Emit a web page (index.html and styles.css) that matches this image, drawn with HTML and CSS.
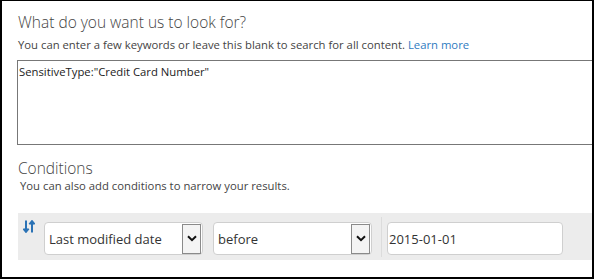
FILE: index.html
```html
<!DOCTYPE html>
<html lang="en">
<head>
  <meta charset="UTF-8" />
  <title>Search query</title>
  <link rel="stylesheet" href="styles.css">
</head>
<body>
  <div class="marco">
    <h2 class="titulo">What do you want us to look for?</h2>
    <p class="ayuda">You can enter a few keywords or leave this blank to search for all content. <a href="#">Learn more</a></p>
    <textarea class="consulta" readonly>SensitiveType:"Credit Card Number"</textarea>

    <h2 class="titulo titulo-cond">Conditions</h2>
    <p class="ayuda ayuda-cond">You can also add conditions to narrow your results.</p>

    <div class="condicion">
      <svg class="orden" width="12" height="13" viewBox="0 0 12 13">
        <path d="M3 0.5 V11.5 M0.4 8.6 L3 11.8 L5.6 8.6" fill="none" stroke="#2a72b5" stroke-width="2"/>
        <path d="M9 12.5 V1.5 M6.4 4.4 L9 1.2 L11.6 4.4" fill="none" stroke="#2a72b5" stroke-width="2"/>
      </svg>
      <div class="campo campo-lista">
        <span class="valor">Last modified date</span>
        <span class="boton"><svg width="10" height="7" viewBox="0 0 10 7"><path d="M1 1.2 L5 5.2 L9 1.2" fill="none" stroke="#111" stroke-width="2"/></svg></span>
      </div>
      <div class="campo campo-lista">
        <span class="valor">before</span>
        <span class="boton"><svg width="10" height="7" viewBox="0 0 10 7"><path d="M1 1.2 L5 5.2 L9 1.2" fill="none" stroke="#111" stroke-width="2"/></svg></span>
      </div>
      <div class="separador"></div>
      <div class="campo campo-fecha">
        <span class="valor">2015-01-01</span>
      </div>
    </div>
  </div>
</body>
</html>
```

FILE: styles.css
```css
body {
  margin: 0;
  background: #fff;
  font-family: "Open Sans", "Noto Sans", sans-serif;
}

.marco {
  box-sizing: border-box;
  width: 594px;
  height: 279px;
  border: 2px solid #000;
  border-top-width: 1px;
  overflow: hidden;
  padding: 11px 0 0 16px;
}

.titulo {
  margin: 0;
  font-size: 15.5px;
  font-weight: 300;
  color: #444;
  line-height: 20px;
}

.ayuda {
  margin: 5px 0 0 0;
  font-size: 11.3px;
  color: #444;
  line-height: 16px;
}

.ayuda a {
  color: #2f7bbf;
  text-decoration: none;
}

.consulta {
  display: block;
  box-sizing: border-box;
  width: 600px;
  height: 85px;
  margin: 7px 0 0 -1px;
  padding: 3px 1px;
  border: 1px solid #777;
  border-right: none;
  font-family: "Open Sans", "Noto Sans", sans-serif;
  font-size: 11.3px;
  color: #222;
  resize: none;
  outline: none;
}

.titulo-cond {
  margin-top: 13px;
}

.ayuda-cond {
  margin-top: 0;
  padding-left: 2px;
}

.condicion {
  display: flex;
  align-items: flex-start;
  height: 47px;
  margin-top: 19px;
  background: #ececec;
  padding: 8px 0 0 5px;
  box-sizing: border-box;
}

.orden {
  margin: -1px 9px 0 0;
}

.campo {
  box-sizing: border-box;
  height: 33px;
  margin-top: 1px;
  background: #fff;
  border: 1px solid #cfcfcf;
  border-radius: 4px;
  display: flex;
  align-items: center;
  justify-content: space-between;
  font-size: 13px;
  color: #333;
}

.campo-lista {
  width: 159px;
  margin-right: 10px;
  padding: 0 1px 0 4px;
}

.campo-lista + .campo-lista {
  margin-right: 0;
}

.boton {
  box-sizing: border-box;
  width: 19px;
  height: 30px;
  border: 1px solid #8a8a8a;
  background: #f4f4f4;
  display: flex;
  align-items: center;
  justify-content: center;
}

.separador {
  width: 1px;
  height: 40px;
  margin: -4px 5px 0 9px;
  background: #dcdcdc;
}

.campo-fecha {
  width: 176px;
  padding-left: 1px;
}
```
